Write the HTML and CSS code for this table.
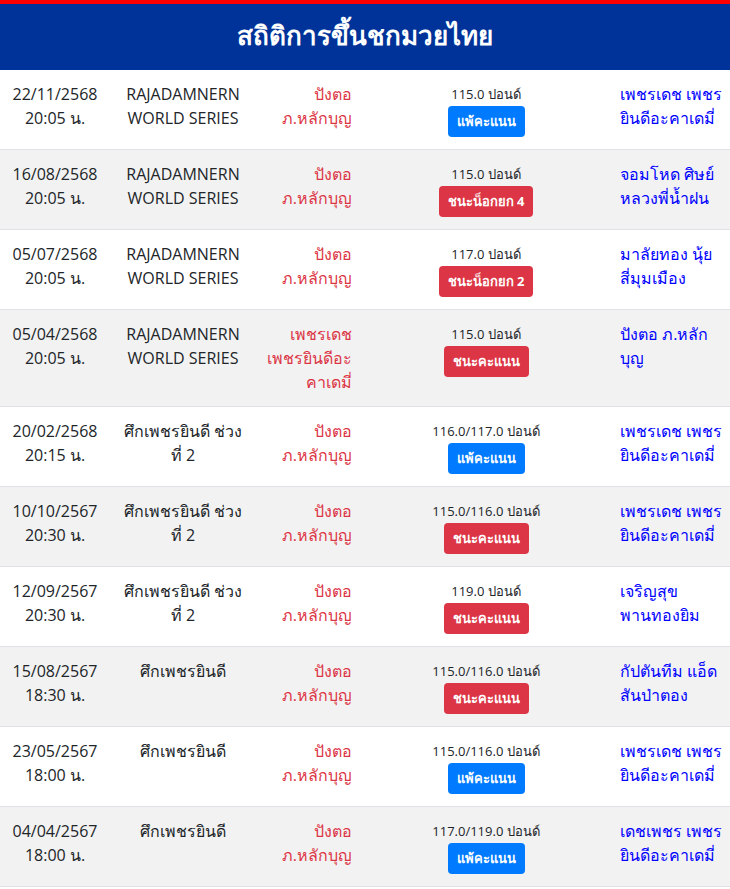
FILE: index.html
```html
<!DOCTYPE html>
<html lang="th">
<head>
<meta charset="utf-8">
<title>สถิติการขึ้นชกมวยไทย</title>
<link rel="stylesheet" href="styles.css">
</head>
<body>
<header class="head"><h1>สถิติการขึ้นชกมวยไทย</h1></header>
<table class="stats">
<tbody>
<tr><td class="date">22/11/2568<br>20:05 น.</td><td class="event">RAJADAMNERN<br>WORLD SERIES</td><td class="red">ปังตอ<br>ภ.หลักบุญ</td><td class="mid"><div class="weight">115.0 ปอนด์</div><div><span class="badge lose">แพ้คะแนน</span></div></td><td class="blue">เพชรเดช เพชร<br>ยินดีอะคาเดมี่</td></tr>
<tr><td class="date">16/08/2568<br>20:05 น.</td><td class="event">RAJADAMNERN<br>WORLD SERIES</td><td class="red">ปังตอ<br>ภ.หลักบุญ</td><td class="mid"><div class="weight">115.0 ปอนด์</div><div><span class="badge win">ชนะน็อกยก 4</span></div></td><td class="blue">จอมโหด ศิษย์<br>หลวงพี่น้ำฝน</td></tr>
<tr><td class="date">05/07/2568<br>20:05 น.</td><td class="event">RAJADAMNERN<br>WORLD SERIES</td><td class="red">ปังตอ<br>ภ.หลักบุญ</td><td class="mid"><div class="weight">117.0 ปอนด์</div><div><span class="badge win">ชนะน็อกยก 2</span></div></td><td class="blue">มาลัยทอง นุ้ย<br>สี่มุมเมือง</td></tr>
<tr><td class="date">05/04/2568<br>20:05 น.</td><td class="event">RAJADAMNERN<br>WORLD SERIES</td><td class="red">เพชรเดช<br>เพชรยินดีอะ<br>คาเดมี่</td><td class="mid"><div class="weight">115.0 ปอนด์</div><div><span class="badge win">ชนะคะแนน</span></div></td><td class="blue">ปังตอ ภ.หลัก<br>บุญ</td></tr>
<tr><td class="date">20/02/2568<br>20:15 น.</td><td class="event">ศึกเพชรยินดี ช่วง<br>ที่ 2</td><td class="red">ปังตอ<br>ภ.หลักบุญ</td><td class="mid"><div class="weight">116.0/117.0 ปอนด์</div><div><span class="badge lose">แพ้คะแนน</span></div></td><td class="blue">เพชรเดช เพชร<br>ยินดีอะคาเดมี่</td></tr>
<tr><td class="date">10/10/2567<br>20:30 น.</td><td class="event">ศึกเพชรยินดี ช่วง<br>ที่ 2</td><td class="red">ปังตอ<br>ภ.หลักบุญ</td><td class="mid"><div class="weight">115.0/116.0 ปอนด์</div><div><span class="badge win">ชนะคะแนน</span></div></td><td class="blue">เพชรเดช เพชร<br>ยินดีอะคาเดมี่</td></tr>
<tr><td class="date">12/09/2567<br>20:30 น.</td><td class="event">ศึกเพชรยินดี ช่วง<br>ที่ 2</td><td class="red">ปังตอ<br>ภ.หลักบุญ</td><td class="mid"><div class="weight">119.0 ปอนด์</div><div><span class="badge win">ชนะคะแนน</span></div></td><td class="blue">เจริญสุข<br>พานทองยิม</td></tr>
<tr><td class="date">15/08/2567<br>18:30 น.</td><td class="event">ศึกเพชรยินดี</td><td class="red">ปังตอ<br>ภ.หลักบุญ</td><td class="mid"><div class="weight">115.0/116.0 ปอนด์</div><div><span class="badge win">ชนะคะแนน</span></div></td><td class="blue">กัปตันทีม แอ็ด<br>สันป่าตอง</td></tr>
<tr><td class="date">23/05/2567<br>18:00 น.</td><td class="event">ศึกเพชรยินดี</td><td class="red">ปังตอ<br>ภ.หลักบุญ</td><td class="mid"><div class="weight">115.0/116.0 ปอนด์</div><div><span class="badge lose">แพ้คะแนน</span></div></td><td class="blue">เพชรเดช เพชร<br>ยินดีอะคาเดมี่</td></tr>
<tr><td class="date">04/04/2567<br>18:00 น.</td><td class="event">ศึกเพชรยินดี</td><td class="red">ปังตอ<br>ภ.หลักบุญ</td><td class="mid"><div class="weight">117.0/119.0 ปอนด์</div><div><span class="badge lose">แพ้คะแนน</span></div></td><td class="blue">เดชเพชร เพชร<br>ยินดีอะคาเดมี่</td></tr>
</tbody>
</table>
</body>
</html>
```
FILE: styles.css
```css
html, body {
  margin: 0;
  padding: 0;
  background: #fff;
}
body {
  font-family: "Open Sans", "Noto Sans", sans-serif;
  font-size: 16px;
  line-height: 24px;
  color: #212529;
}
.head {
  background: #003399;
  border-top: 4px solid #ff0000;
  height: 66px;
  display: flex;
  align-items: center;
  justify-content: center;
}
.head h1 {
  margin: 0 0 4px;
  color: #fff;
  font-size: 26px;
  font-weight: bold;
  line-height: 34px;
}
.stats {
  width: 730px;
  border-collapse: collapse;
  table-layout: fixed;
}
.stats tr {
  border-bottom: 1px solid #dee2e6;
}
.stats tr:nth-child(even) {
  background: #f2f2f2;
}
.stats td {
  padding: 12px;
  vertical-align: top;
  white-space: nowrap;
}
.stats td.date { width: 86px; text-align: center; color: #212529; }
.stats td.event { width: 122px; text-align: center; }
.stats td.red { width: 96px; padding-left: 0; text-align: right; color: #dc3545; }
.stats td.mid { width: 220px; text-align: center; }
.stats td.blue { text-align: left; color: #0000ff; }
.weight {
  font-size: 13px;
  line-height: 24px;
  color: #212529;
}
.badge {
  display: inline-block;
  vertical-align: top;
  padding: 4px 9px;
  border-radius: 4px;
  color: #fff;
  font-size: 13px;
  font-weight: bold;
  line-height: 23px;
}
.badge.lose { background: #007bff; }
.badge.win { background: #dc3545; }
```
